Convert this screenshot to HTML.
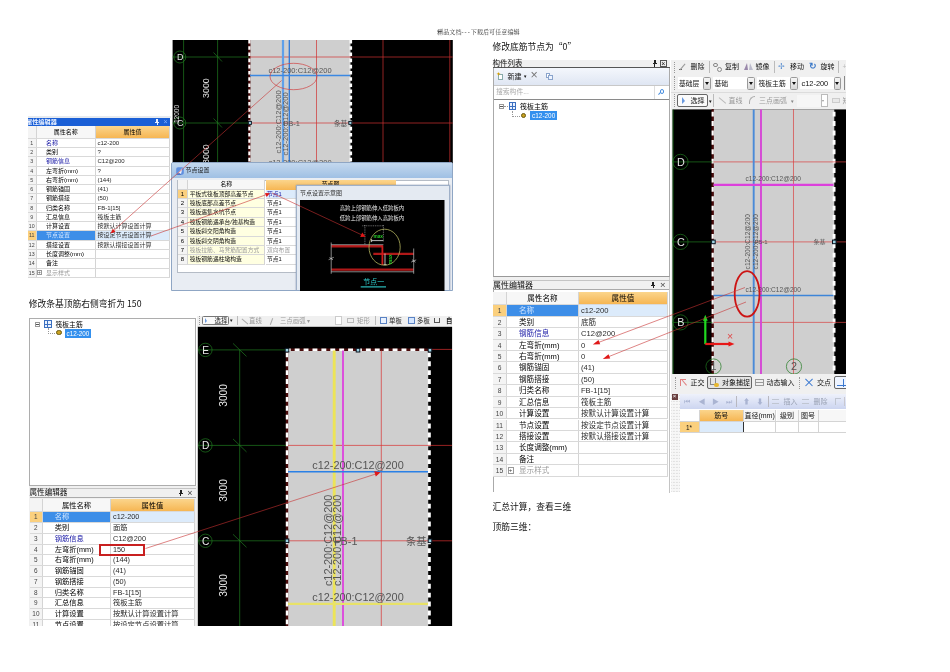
<!DOCTYPE html>
<html lang="zh"><head><meta charset="utf-8"><title>doc</title>
<style>
html,body{margin:0;padding:0;background:#fff;}
body{width:950px;height:672px;position:relative;overflow:hidden;font-family:"Liberation Sans","Noto Sans CJK SC",sans-serif;color:#000;}
.abs{position:absolute;}
.ui{font-family:"Liberation Sans","Noto Sans CJK SC",sans-serif;}
.hd{position:absolute;font-size:8.75px;line-height:12px;white-space:nowrap;color:#111;font-family:"Noto Sans CJK SC",sans-serif;font-weight:400;}
.tbl{position:absolute;background:#fff;overflow:hidden;}
.row{position:absolute;left:0;right:0;border-bottom:1px solid #d9d9d9;box-sizing:border-box;white-space:nowrap;}
.c{position:absolute;top:0;bottom:0;box-sizing:border-box;border-right:1px solid #d4d4d4;overflow:hidden;white-space:nowrap;}
.num{background:#f4f4f4;color:#444;text-align:center;font-size:88%;}
.blue{color:#1a1aa6;}
.gray{color:#9a9a9a;}
.org{background:linear-gradient(#fbd58c,#f6b653);}
svg{position:absolute;overflow:hidden;}
svg text{font-family:"Liberation Sans","Noto Sans CJK SC",sans-serif;}
</style></head><body><div id="pg" style="position:absolute;left:0;top:0;width:950px;height:672px;overflow:hidden;background:#fff;filter:blur(0.35px);">

<div class="abs" style="left:3.4px;width:950px;top:28px;text-align:center;font-family:'Liberation Serif','Noto Serif CJK SC',serif;font-size:6.12px;line-height:8px;color:#333;">精品文档<span style="letter-spacing:0.17em;">---</span>下载后可任意编辑</div>
<svg style="left:171px;top:40px;" width="282" height="126" viewBox="171 40 282 126">
<rect x="171" y="40" width="282" height="126" fill="#fff"/>
<rect x="172.6" y="40" width="280.2" height="126" fill="#000"/>
<rect x="249.5" y="40" width="101" height="126" fill="#cfcfcf"/>
<line x1="249.4" y1="40" x2="249.4" y2="166" stroke="#4a0c0c" stroke-width="2.2"/><line x1="249.4" y1="40" x2="249.4" y2="166" stroke="#fff" stroke-width="2.2" stroke-dasharray="3.6 2.6"/>
<line x1="350.8" y1="40" x2="350.8" y2="166" stroke="#fff" stroke-width="2.6" stroke-dasharray="3.6 2.6"/>
<line x1="172.6" y1="57" x2="249" y2="57" stroke="#1f7a1f" stroke-width="0.7"/><line x1="172.6" y1="123" x2="249" y2="123" stroke="#1f7a1f" stroke-width="0.7"/>
<line x1="183.6" y1="40" x2="183.6" y2="166" stroke="#1f7a1f" stroke-width="0.7"/><line x1="217.6" y1="40" x2="217.6" y2="166" stroke="#1f7a1f" stroke-width="0.7"/>
<line x1="213.5" y1="52.5" x2="222" y2="61.5" stroke="#1f7a1f" stroke-width="0.7"/><line x1="213.5" y1="118.5" x2="222" y2="127.5" stroke="#1f7a1f" stroke-width="0.7"/>
<circle cx="179.8" cy="57" r="6" fill="none" stroke="#1f7a1f" stroke-width="0.7"/><circle cx="179.8" cy="123" r="6" fill="none" stroke="#1f7a1f" stroke-width="0.7"/>
<text x="180.2" y="60.4" font-size="9" fill="#e0e0e0" text-anchor="middle">D</text>
<text x="180.2" y="126.4" font-size="9" fill="#e0e0e0" text-anchor="middle">C</text>
<text transform="translate(208.8,88.1) rotate(-90)" font-size="8.9" fill="#e0e0e0" text-anchor="middle">3000</text>
<text transform="translate(208.8,154.1) rotate(-90)" font-size="8.9" fill="#e0e0e0" text-anchor="middle">3000</text>
<text transform="translate(178.5,123) rotate(-90)" font-size="6.5" fill="#e8e8e8" text-anchor="start">12000</text>
<line x1="250" y1="57" x2="452.8" y2="57" stroke="#d03030" stroke-width="0.7"/><line x1="250" y1="123" x2="452.8" y2="123" stroke="#d03030" stroke-width="0.7"/>
<line x1="316.5" y1="40" x2="316.5" y2="166" stroke="#d03030" stroke-width="0.7"/><line x1="383" y1="40" x2="383" y2="166" stroke="#d03030" stroke-width="0.7"/><line x1="449.8" y1="40" x2="449.8" y2="166" stroke="#d03030" stroke-width="0.7"/>
<line x1="283" y1="40" x2="283" y2="166" stroke="#5fa0ea" stroke-width="2.2"/><line x1="289.3" y1="40" x2="289.3" y2="166" stroke="#2b78d8" stroke-width="1.3"/>
<line x1="250" y1="75.5" x2="350" y2="75.5" stroke="#3b88e2" stroke-width="1.4"/>
<text x="300" y="73.3" font-size="7.5" fill="#555" textLength="63.2" lengthAdjust="spacingAndGlyphs" text-anchor="middle">c12-200:C12@200</text>
<text x="300" y="165.3" font-size="7.5" fill="#555" textLength="63.2" lengthAdjust="spacingAndGlyphs" text-anchor="middle">c12-200:C12@200</text>
<text transform="translate(281,122) rotate(-90)" font-size="7.5" fill="#555" textLength="63.2" lengthAdjust="spacingAndGlyphs" text-anchor="middle">c12-200:C12@200</text>
<text transform="translate(287.5,124) rotate(-90)" font-size="7.5" fill="#555" textLength="63.2" lengthAdjust="spacingAndGlyphs" text-anchor="middle">c12-200:C12@200</text>
<text x="283.6" y="125.6" font-size="7.5" fill="#555">FB-1</text>
<text x="334" y="125.5" font-size="6.6" fill="#555">条基</text>
<rect x="248.4" y="121.4" width="3" height="3" fill="#9fd4e4" stroke="#0a1420" stroke-width="0.9"/>
<rect x="348.8" y="121.4" width="3" height="3" fill="#9fd4e4" stroke="#0a1420" stroke-width="0.9"/>
<ellipse cx="293.5" cy="76.5" rx="23.5" ry="13.2" fill="none" stroke="#d04040" stroke-width="0.7"/>
</svg>
<div class="abs ui" style="left:28px;top:115.5px;width:143px;height:2.5px;background:#e6eaef;"></div>
<div class="abs ui" style="left:28px;top:117.6px;width:142px;height:8px;background:#1a5fd6;color:#e8f0ff;font-size:6.2px;line-height:8px;font-weight:bold;white-space:nowrap;overflow:hidden;"><span style="position:absolute;left:-2px;">属性编辑器</span><span class="abs" style="right:11px;top:1px;width:4px;height:6.5px;"><span class="abs" style="left:1px;top:0;width:2.2px;height:3.2px;border:0.7px solid #e8f0ff;border-right-width:1.2px;box-sizing:border-box;"></span><span class="abs" style="left:0;top:3.2px;width:4px;height:0.8px;background:#e8f0ff;"></span><span class="abs" style="left:1.7px;top:4px;width:0.8px;height:2.4px;background:#e8f0ff;"></span></span><span style="position:absolute;right:2.5px;font-weight:normal;color:#7fb0ff;font-size:7px;">×</span></div>
<div class="tbl ui" style="left:28px;top:125.6px;width:142px;height:152.4px;font-size:6.0px;line-height:9.27px;"><div class="row" style="top:0;height:13.2px;line-height:13.2px;text-align:center;"><div class="c num" style="left:0;width:8.5px;"></div><div class="c" style="left:8.5px;width:59.5px;background:#f7f7f7;">属性名称</div><div class="c org" style="left:68px;width:74px;">属性值</div></div><div class="row" style="top:13.20px;height:9.27px;"><div class="c num" style="left:0;width:8.5px;">1</div><div class="c blue" style="left:8.5px;width:59.5px;padding-left:9.6px;">名称</div><div class="c" style="left:68px;width:74px;padding-left:1.5px;color:#2a2a2a;">c12-200</div></div><div class="row" style="top:22.47px;height:9.27px;"><div class="c num" style="left:0;width:8.5px;">2</div><div class="c " style="left:8.5px;width:59.5px;padding-left:9.6px;">类别</div><div class="c" style="left:68px;width:74px;padding-left:1.5px;color:#2a2a2a;">?</div></div><div class="row" style="top:31.74px;height:9.27px;"><div class="c num" style="left:0;width:8.5px;">3</div><div class="c blue" style="left:8.5px;width:59.5px;padding-left:9.6px;">钢筋信息</div><div class="c" style="left:68px;width:74px;padding-left:1.5px;color:#2a2a2a;">C12@200</div></div><div class="row" style="top:41.01px;height:9.27px;"><div class="c num" style="left:0;width:8.5px;">4</div><div class="c " style="left:8.5px;width:59.5px;padding-left:9.6px;">左弯折(mm)</div><div class="c" style="left:68px;width:74px;padding-left:1.5px;color:#2a2a2a;">?</div></div><div class="row" style="top:50.28px;height:9.27px;"><div class="c num" style="left:0;width:8.5px;">5</div><div class="c " style="left:8.5px;width:59.5px;padding-left:9.6px;">右弯折(mm)</div><div class="c" style="left:68px;width:74px;padding-left:1.5px;color:#2a2a2a;">(144)</div></div><div class="row" style="top:59.55px;height:9.27px;"><div class="c num" style="left:0;width:8.5px;">6</div><div class="c " style="left:8.5px;width:59.5px;padding-left:9.6px;">钢筋锚固</div><div class="c" style="left:68px;width:74px;padding-left:1.5px;color:#2a2a2a;">(41)</div></div><div class="row" style="top:68.82px;height:9.27px;"><div class="c num" style="left:0;width:8.5px;">7</div><div class="c " style="left:8.5px;width:59.5px;padding-left:9.6px;">钢筋搭接</div><div class="c" style="left:68px;width:74px;padding-left:1.5px;color:#2a2a2a;">(50)</div></div><div class="row" style="top:78.09px;height:9.27px;"><div class="c num" style="left:0;width:8.5px;">8</div><div class="c " style="left:8.5px;width:59.5px;padding-left:9.6px;">归类名称</div><div class="c" style="left:68px;width:74px;padding-left:1.5px;color:#2a2a2a;">FB-1[15]</div></div><div class="row" style="top:87.36px;height:9.27px;"><div class="c num" style="left:0;width:8.5px;">9</div><div class="c " style="left:8.5px;width:59.5px;padding-left:9.6px;">汇总信息</div><div class="c" style="left:68px;width:74px;padding-left:1.5px;color:#2a2a2a;">筏板主筋</div></div><div class="row" style="top:96.63px;height:9.27px;"><div class="c num" style="left:0;width:8.5px;">10</div><div class="c " style="left:8.5px;width:59.5px;padding-left:9.6px;">计算设置</div><div class="c" style="left:68px;width:74px;padding-left:1.5px;color:#2a2a2a;">按默认计算设置计算</div></div><div class="row" style="top:105.90px;height:9.27px;"><div class="c num" style="left:0;width:8.5px;background:#fbd07e;">11</div><div class="c " style="left:8.5px;width:59.5px;padding-left:9.6px;background:#3d8ee8;color:#cfe4ff;">节点设置</div><div class="c" style="left:68px;width:74px;padding-left:1.5px;color:#2a2a2a;background:#dcebfb;">按设定节点设置计算</div></div><div class="row" style="top:115.17px;height:9.27px;"><div class="c num" style="left:0;width:8.5px;">12</div><div class="c " style="left:8.5px;width:59.5px;padding-left:9.6px;">搭接设置</div><div class="c" style="left:68px;width:74px;padding-left:1.5px;color:#2a2a2a;">按默认搭接设置计算</div></div><div class="row" style="top:124.44px;height:9.27px;"><div class="c num" style="left:0;width:8.5px;">13</div><div class="c " style="left:8.5px;width:59.5px;padding-left:9.6px;">长度调整(mm)</div><div class="c" style="left:68px;width:74px;padding-left:1.5px;color:#2a2a2a;"></div></div><div class="row" style="top:133.71px;height:9.27px;"><div class="c num" style="left:0;width:8.5px;">14</div><div class="c " style="left:8.5px;width:59.5px;padding-left:9.6px;">备注</div><div class="c" style="left:68px;width:74px;padding-left:1.5px;color:#2a2a2a;"></div></div><div class="row" style="top:142.98px;height:9.27px;"><div class="c num" style="left:0;width:8.5px;">15</div><div class="c gray" style="left:8.5px;width:59.5px;padding-left:9.6px;"><span style="position:absolute;left:0.6px;top:1.9px;width:4.8px;height:4.8px;border:1px solid #999;box-sizing:border-box;line-height:3.9px;font-size:4.8px;text-align:center;color:#444;">+</span>显示样式</div><div class="c" style="left:68px;width:74px;padding-left:1.5px;color:#2a2a2a;"></div></div></div>
<div class="abs ui" style="left:170.5px;top:162.3px;width:282.5px;height:128.3px;background:#e9edf3;border:1px solid #8fa6c4;box-sizing:border-box;overflow:hidden;border-radius:2px 2px 0 0;">
<div class="abs" style="left:0;top:0;width:100%;height:14.5px;background:linear-gradient(#c4d8ee,#9fc0e4);"></div>
<div class="abs" style="left:14px;top:3.2px;font-size:6px;line-height:9px;color:#111;">节点设置</div>
<svg style="left:4.8px;top:4.2px;" width="8" height="8" viewBox="0 0 8 8"><rect x="0.2" y="0.2" width="7.6" height="7.6" rx="1.8" fill="#5f8fe0"/><path d="M0.8 7 L6.6 0.8 L5 7 Z" fill="#f0f6ff"/><path d="M0.5 7.4 Q3 5 5.4 7.4 Z" fill="#2a4fb0"/></svg>
<div class="abs" style="left:5.5px;top:16.5px;width:272px;height:93px;background:#fff;border:1px solid #b5bcc6;box-sizing:border-box;"></div>
<div class="abs" style="left:6.2px;top:17.2px;width:10.5px;height:9.2px;background:#f4f4f4;border-right:1px solid #d4d4d4;border-bottom:1px solid #d4d4d4;box-sizing:border-box;"></div>
<div class="abs" style="left:16.7px;top:17.2px;width:77.3px;height:9.2px;background:#f7f7f7;border-right:1px solid #d4d4d4;border-bottom:1px solid #d4d4d4;box-sizing:border-box;font-size:5.8px;line-height:9px;text-align:center;">名称</div>
<div class="abs org" style="left:94.0px;top:17.2px;width:130px;height:9.2px;box-sizing:border-box;font-size:5.8px;line-height:9px;text-align:center;">节点图</div>
<div class="abs" style="left:6.2px;top:26.40px;width:10.5px;height:9.4px;background:#fbd07e;border-right:1px solid #d4d4d4;border-bottom:1px solid #d9d9d9;box-sizing:border-box;font-size:6px;line-height:9.4px;text-align:center;">1</div>
<div class="abs" style="left:16.7px;top:26.40px;width:77.3px;height:9.4px;background:#ffffe1;border-right:1px solid #d4d4d4;border-bottom:1px solid #d9d9d9;box-sizing:border-box;font-size:5.8px;line-height:9.4px;padding-left:1.5px;white-space:nowrap;overflow:hidden;color:#111;">平板式筏板顶部高差节点</div>
<div class="abs" style="left:94.0px;top:26.40px;width:184px;height:9.4px;border-bottom:1px solid #d9d9d9;box-sizing:border-box;font-size:5.8px;line-height:9.4px;padding-left:1.5px;white-space:nowrap;color:#111;background:#dcebfb;color:#1a1aa6;">节点1</div>
<div class="abs" style="left:6.2px;top:35.80px;width:10.5px;height:9.4px;background:#f4f4f4;border-right:1px solid #d4d4d4;border-bottom:1px solid #d9d9d9;box-sizing:border-box;font-size:6px;line-height:9.4px;text-align:center;">2</div>
<div class="abs" style="left:16.7px;top:35.80px;width:77.3px;height:9.4px;background:#ffffe1;border-right:1px solid #d4d4d4;border-bottom:1px solid #d9d9d9;box-sizing:border-box;font-size:5.8px;line-height:9.4px;padding-left:1.5px;white-space:nowrap;overflow:hidden;color:#111;">筏板底部高差节点</div>
<div class="abs" style="left:94.0px;top:35.80px;width:184px;height:9.4px;border-bottom:1px solid #d9d9d9;box-sizing:border-box;font-size:5.8px;line-height:9.4px;padding-left:1.5px;white-space:nowrap;color:#111;">节点1</div>
<div class="abs" style="left:6.2px;top:45.20px;width:10.5px;height:9.4px;background:#f4f4f4;border-right:1px solid #d4d4d4;border-bottom:1px solid #d9d9d9;box-sizing:border-box;font-size:6px;line-height:9.4px;text-align:center;">3</div>
<div class="abs" style="left:16.7px;top:45.20px;width:77.3px;height:9.4px;background:#ffffe1;border-right:1px solid #d4d4d4;border-bottom:1px solid #d9d9d9;box-sizing:border-box;font-size:5.8px;line-height:9.4px;padding-left:1.5px;white-space:nowrap;overflow:hidden;color:#111;">筏板遇集水坑节点</div>
<div class="abs" style="left:94.0px;top:45.20px;width:184px;height:9.4px;border-bottom:1px solid #d9d9d9;box-sizing:border-box;font-size:5.8px;line-height:9.4px;padding-left:1.5px;white-space:nowrap;color:#111;">节点1</div>
<div class="abs" style="left:6.2px;top:54.60px;width:10.5px;height:9.4px;background:#f4f4f4;border-right:1px solid #d4d4d4;border-bottom:1px solid #d9d9d9;box-sizing:border-box;font-size:6px;line-height:9.4px;text-align:center;">4</div>
<div class="abs" style="left:16.7px;top:54.60px;width:77.3px;height:9.4px;background:#ffffe1;border-right:1px solid #d4d4d4;border-bottom:1px solid #d9d9d9;box-sizing:border-box;font-size:5.8px;line-height:9.4px;padding-left:1.5px;white-space:nowrap;overflow:hidden;color:#111;">筏板钢筋遇承台/独基构造</div>
<div class="abs" style="left:94.0px;top:54.60px;width:184px;height:9.4px;border-bottom:1px solid #d9d9d9;box-sizing:border-box;font-size:5.8px;line-height:9.4px;padding-left:1.5px;white-space:nowrap;color:#111;">节点1</div>
<div class="abs" style="left:6.2px;top:64.00px;width:10.5px;height:9.4px;background:#f4f4f4;border-right:1px solid #d4d4d4;border-bottom:1px solid #d9d9d9;box-sizing:border-box;font-size:6px;line-height:9.4px;text-align:center;">5</div>
<div class="abs" style="left:16.7px;top:64.00px;width:77.3px;height:9.4px;background:#ffffe1;border-right:1px solid #d4d4d4;border-bottom:1px solid #d9d9d9;box-sizing:border-box;font-size:5.8px;line-height:9.4px;padding-left:1.5px;white-space:nowrap;overflow:hidden;color:#111;">筏板斜交阳角构造</div>
<div class="abs" style="left:94.0px;top:64.00px;width:184px;height:9.4px;border-bottom:1px solid #d9d9d9;box-sizing:border-box;font-size:5.8px;line-height:9.4px;padding-left:1.5px;white-space:nowrap;color:#111;">节点1</div>
<div class="abs" style="left:6.2px;top:73.40px;width:10.5px;height:9.4px;background:#f4f4f4;border-right:1px solid #d4d4d4;border-bottom:1px solid #d9d9d9;box-sizing:border-box;font-size:6px;line-height:9.4px;text-align:center;">6</div>
<div class="abs" style="left:16.7px;top:73.40px;width:77.3px;height:9.4px;background:#ffffe1;border-right:1px solid #d4d4d4;border-bottom:1px solid #d9d9d9;box-sizing:border-box;font-size:5.8px;line-height:9.4px;padding-left:1.5px;white-space:nowrap;overflow:hidden;color:#111;">筏板斜交阴角构造</div>
<div class="abs" style="left:94.0px;top:73.40px;width:184px;height:9.4px;border-bottom:1px solid #d9d9d9;box-sizing:border-box;font-size:5.8px;line-height:9.4px;padding-left:1.5px;white-space:nowrap;color:#111;">节点1</div>
<div class="abs" style="left:6.2px;top:82.80px;width:10.5px;height:9.4px;background:#f4f4f4;border-right:1px solid #d4d4d4;border-bottom:1px solid #d9d9d9;box-sizing:border-box;font-size:6px;line-height:9.4px;text-align:center;">7</div>
<div class="abs" style="left:16.7px;top:82.80px;width:77.3px;height:9.4px;background:#ffffe1;border-right:1px solid #d4d4d4;border-bottom:1px solid #d9d9d9;box-sizing:border-box;font-size:5.8px;line-height:9.4px;padding-left:1.5px;white-space:nowrap;overflow:hidden;color:#9a9a9a;">筏板拉筋、马凳筋配置方式</div>
<div class="abs" style="left:94.0px;top:82.80px;width:184px;height:9.4px;border-bottom:1px solid #d9d9d9;box-sizing:border-box;font-size:5.8px;line-height:9.4px;padding-left:1.5px;white-space:nowrap;color:#9a9a9a;">双向布置</div>
<div class="abs" style="left:6.2px;top:92.20px;width:10.5px;height:9.4px;background:#f4f4f4;border-right:1px solid #d4d4d4;border-bottom:1px solid #d9d9d9;box-sizing:border-box;font-size:6px;line-height:9.4px;text-align:center;">8</div>
<div class="abs" style="left:16.7px;top:92.20px;width:77.3px;height:9.4px;background:#ffffe1;border-right:1px solid #d4d4d4;border-bottom:1px solid #d9d9d9;box-sizing:border-box;font-size:5.8px;line-height:9.4px;padding-left:1.5px;white-space:nowrap;overflow:hidden;color:#111;">筏板钢筋遇柱墩构造</div>
<div class="abs" style="left:94.0px;top:92.20px;width:184px;height:9.4px;border-bottom:1px solid #d9d9d9;box-sizing:border-box;font-size:5.8px;line-height:9.4px;padding-left:1.5px;white-space:nowrap;color:#111;">节点1</div>
<div class="abs" style="left:124px;top:21.5px;width:154.5px;height:110px;background:#e4eaf2;border:1px solid #9fb0c8;box-sizing:border-box;box-shadow:0 0 1.5px #7f8fa8;"></div>
<div class="abs" style="left:128.5px;top:25.5px;font-size:6px;line-height:9px;color:#333;">节点设置示意图</div>
</div>
<svg style="left:300px;top:199.5px;" width="144.5" height="91.1" viewBox="300 199.5 144.5 91.1">
<rect x="300" y="199.5" width="144.5" height="92" fill="#000"/>
<text x="372" y="209.8" font-size="5.4" fill="#e8e8e8" text-anchor="middle">高跨上部钢筋伸入低跨板内</text>
<text x="372" y="219.2" font-size="5.4" fill="#e8e8e8" text-anchor="middle">低跨上部钢筋伸入高跨板内</text>
<path d="M331.4 245.8 L382.6 245.8 M373.3 253.4 L413.6 253.4 M331.4 269.1 L413.6 269.1" stroke="#b01818" stroke-width="2.4" fill="none"/>
<path d="M382.4 245 L382.4 264.5" stroke="#d01a1a" stroke-width="1.8" fill="none"/>
<path d="M331.2 242 L331.2 273.3 M413.7 248 L413.7 273.3 M331.2 271.3 L413.7 271.3 M331.2 244.2 L383.4 244.2" stroke="#e0e0e0" stroke-width="0.6" fill="none"/>
<path d="M385 253 L385 264.2 M383.6 264.2 L386.6 264.2" stroke="#e8e8e8" stroke-width="0.8" fill="none"/>
<ellipse cx="384.6" cy="246.7" rx="15.6" ry="18" fill="none" stroke="#b4b45e" stroke-width="0.8"/>
<path d="M364.9 224.5 L364.9 244.5 M362.3 225.3 L383.4 225.3 M383.4 224.5 L383.4 241" stroke="#e0e0e0" stroke-width="0.5" stroke-dasharray="1 0.8" fill="none"/>
<path d="M371.6 240.1 L383.4 240.1 M371.6 238.6 L371.6 241.6" stroke="#e8e8e8" stroke-width="0.8" fill="none"/>
<text x="378.2" y="237.4" font-size="4.8" font-weight="bold" fill="#28c828" text-anchor="middle">max</text>
<text transform="translate(391.8,258.6) rotate(-90)" font-size="4.8" font-weight="bold" fill="#28c828" text-anchor="middle">max</text>
<path d="M328.6 259.2 L331.2 258 L333.8 256.8 M329.5 257 L333 259.4 M411.2 261.6 L416.2 259.4 M412 259.2 L415.5 261.8" stroke="#e0e0e0" stroke-width="0.6" fill="none"/>
<text x="373.7" y="283.8" font-size="7" fill="#30cfcf" text-anchor="middle">节点一</text>
<line x1="360.7" y1="286.4" x2="386" y2="286.4" stroke="#30cfcf" stroke-width="1.1"/>
</svg>
<svg style="left:0;top:0;pointer-events:none;" width="475" height="300" viewBox="0 0 475 300">
<line x1="281.6" y1="80.5" x2="112" y2="232" stroke="#c83030" stroke-width="0.6" fill="none"/>
<polygon points="110.5,233.5 115.5,231.8 112.8,228.8" fill="#e01818"/>
<line x1="151" y1="236" x2="268" y2="194" stroke="#c83030" stroke-width="0.6" fill="none"/>
<polygon points="270,193.3 265,193 266.6,197" fill="#e01818"/>
<line x1="272" y1="193" x2="362" y2="235" stroke="#c83030" stroke-width="0.6" fill="none"/>
<polygon points="365.6,236.8 360.2,237 362.2,232.6" fill="#e01818"/>
</svg>
<div class="hd" style="left:28.8px;top:297.5px;">修改条基顶筋右侧弯折为 150</div>
<div class="abs ui" style="left:29px;top:317.5px;width:167px;height:168px;background:#fff;border:1px solid #adadad;box-sizing:border-box;font-size:6.8px;line-height:9px;">
<span class="abs" style="left:5px;top:3px;width:5px;height:5px;border:0.7px solid #999;box-sizing:border-box;"></span><span class="abs" style="left:6.2px;top:5.2px;width:2.6px;height:0.6px;background:#555;"></span>
<span class="abs" style="left:14px;top:1.6px;width:7.5px;height:7.5px;border:0.8px solid #3a6fc0;background:#eaf2ff;box-sizing:border-box;"></span><span class="abs" style="left:17.3px;top:2px;width:0.8px;height:6.6px;background:#3a6fc0;"></span><span class="abs" style="left:14.4px;top:5px;width:6.8px;height:0.8px;background:#3a6fc0;"></span>
<span class="abs" style="left:25.5px;top:1px;white-space:nowrap;">筏板主筋</span>
<span class="abs" style="left:17.5px;top:9.5px;width:6px;height:4.8px;border-left:0.7px dotted #999;border-bottom:0.7px dotted #999;"></span>
<span class="abs" style="left:26px;top:11px;width:5.6px;height:5.6px;border-radius:50%;background:#c8a020;border:0.8px solid #6a5a10;box-sizing:border-box;"></span>
<span class="abs" style="left:35px;top:10px;height:9.2px;background:#3390ee;color:#fff;font-size:6.3px;line-height:9.2px;padding:0 1.5px;white-space:nowrap;">c12-200</span>
</div>
<div class="abs ui" style="left:197px;top:316px;width:255.2px;height:10.6px;background:#f0f0f0;font-size:6.4px;line-height:9px;white-space:nowrap;overflow:hidden;color:#222;">
<span class="abs" style="left:2px;top:0;width:2px;height:9px;border-left:1px dotted #999;"></span>
<span class="abs" style="left:4.5px;top:-0.5px;width:27px;height:9.6px;border:1px solid #777;border-radius:1.5px;box-sizing:border-box;background:#fafafa;"></span>
<span class="abs" style="left:17.5px;top:-0.5px;">选择</span><span class="abs" style="left:32px;top:0px;font-size:4.5px;">▼</span>
<span class="abs" style="left:39.5px;top:0;width:1px;height:9.4px;background:#bbb;"></span>
<span class="abs" style="left:44px;top:4.6px;width:8px;height:0.8px;background:#aaa;transform:rotate(40deg);"></span><span class="abs" style="left:73.5px;top:1.5px;width:1px;height:7px;background:#aaa;transform:rotate(20deg);"></span><span class="abs" style="left:8px;top:2px;width:0;height:0;border-left:2.6px solid #6a9ae0;border-bottom:2.6px solid transparent;border-top:3.4px solid transparent;"></span>
<span class="abs" style="left:52px;top:-0.5px;color:#999;">直线</span><span class="abs" style="left:83px;top:-0.5px;color:#999;">三点画弧 ▾</span>
<span class="abs" style="left:138px;top:0;width:7px;height:9px;border:1px solid #ccc;box-sizing:border-box;background:#fff;"></span>
<span class="abs" style="left:150px;top:1.5px;width:6.5px;height:5px;border:0.8px solid #bbb;box-sizing:border-box;"></span><span class="abs" style="left:160px;top:-0.5px;color:#999;">矩形</span>
<span class="abs" style="left:178px;top:0;width:1px;height:9.4px;background:#bbb;"></span>
<span class="abs" style="left:182.5px;top:1px;width:7px;height:6.5px;border:0.8px solid #5b83c4;box-sizing:border-box;background:#eaf2ff;"></span><span class="abs" style="left:192px;top:-0.5px;">单板</span>
<span class="abs" style="left:210.5px;top:1px;width:7px;height:6.5px;border:0.8px solid #5b83c4;box-sizing:border-box;background:#d5e6ff;"></span><span class="abs" style="left:220px;top:-0.5px;">多板</span>
<span class="abs" style="left:237px;top:1.5px;width:6px;height:5px;border:0.8px solid #555;border-top:none;box-sizing:border-box;"></span><span class="abs" style="left:249px;top:-0.5px;font-weight:bold;">自</span>
</div>
<svg style="left:197px;top:325.6px;" width="256" height="300" viewBox="197 325.6 256 300">
<rect x="197.8" y="326.4" width="254.3" height="299.4" fill="#000"/>
<rect x="287" y="350" width="141.2" height="276" fill="#cfcfcf"/>
<line x1="285.8" y1="349.4" x2="430.8" y2="349.4" stroke="#4a0c0c" stroke-width="2.4"/><line x1="285.8" y1="349.4" x2="430.8" y2="349.4" stroke="#fff" stroke-width="2.4" stroke-dasharray="4.9 4"/>
<line x1="287" y1="350" x2="287" y2="626" stroke="#4a0c0c" stroke-width="2.4"/><line x1="287" y1="352" x2="287" y2="626" stroke="#fff" stroke-width="2.4" stroke-dasharray="4.9 4"/>
<line x1="429.3" y1="352" x2="429.3" y2="626" stroke="#fff" stroke-width="3" stroke-dasharray="4.9 4"/>
<line x1="198" y1="349.5" x2="286" y2="349.5" stroke="#1f7a1f" stroke-width="0.7"/><line x1="198" y1="445" x2="286" y2="445" stroke="#1f7a1f" stroke-width="0.7"/><line x1="198" y1="540.4" x2="286" y2="540.4" stroke="#1f7a1f" stroke-width="0.7"/>
<line x1="239.7" y1="349.5" x2="239.7" y2="626" stroke="#1f7a1f" stroke-width="0.7"/>
<line x1="233" y1="343.0" x2="246.5" y2="356.0" stroke="#1f7a1f" stroke-width="0.7"/>
<circle cx="205.4" cy="349.5" r="6.7" fill="none" stroke="#1f7a1f" stroke-width="0.7"/>
<line x1="233" y1="438.5" x2="246.5" y2="451.5" stroke="#1f7a1f" stroke-width="0.7"/>
<circle cx="205.4" cy="445" r="6.7" fill="none" stroke="#1f7a1f" stroke-width="0.7"/>
<line x1="233" y1="533.9" x2="246.5" y2="546.9" stroke="#1f7a1f" stroke-width="0.7"/>
<circle cx="205.4" cy="540.4" r="6.7" fill="none" stroke="#1f7a1f" stroke-width="0.7"/>
<text x="205.6" y="353.6" font-size="10.2" fill="#e8e8e8" text-anchor="middle">E</text>
<text x="205.6" y="449.1" font-size="10.2" fill="#e8e8e8" text-anchor="middle">D</text>
<text x="205.6" y="544.5" font-size="10.2" fill="#e8e8e8" text-anchor="middle">C</text>
<text transform="translate(227,395) rotate(-90)" font-size="10.2" fill="#e8e8e8" text-anchor="middle">3000</text>
<text transform="translate(227,490) rotate(-90)" font-size="10.2" fill="#e8e8e8" text-anchor="middle">3000</text>
<text transform="translate(227,585) rotate(-90)" font-size="10.2" fill="#e8e8e8" text-anchor="middle">3000</text>
<text transform="translate(227,660) rotate(-90)" font-size="10.2" fill="#e8e8e8" text-anchor="middle">3000</text>
<line x1="431" y1="349" x2="452" y2="349" stroke="#d83030" stroke-width="0.7"/><line x1="288" y1="445" x2="452" y2="445" stroke="#d83030" stroke-width="0.7"/><line x1="288" y1="540.4" x2="452" y2="540.4" stroke="#d83030" stroke-width="0.7"/>
<line x1="381.3" y1="350" x2="381.3" y2="626" stroke="#d83030" stroke-width="0.7"/>
<line x1="334.2" y1="350" x2="334.2" y2="626" stroke="#ece458" stroke-width="2.9"/>
<line x1="343" y1="350" x2="343" y2="626" stroke="#dc50dc" stroke-width="2"/>
<line x1="288" y1="471.4" x2="428" y2="471.4" stroke="#2a80e6" stroke-width="1.5"/>
<line x1="288" y1="603.5" x2="428" y2="603.5" stroke="#e8e268" stroke-width="2.2"/>
<text x="358" y="468.3" font-size="10.8" fill="#555" textLength="91.4" lengthAdjust="spacingAndGlyphs" text-anchor="middle">c12-200:C12@200</text>
<text x="358" y="600.3" font-size="10.8" fill="#555" textLength="91.4" lengthAdjust="spacingAndGlyphs" text-anchor="middle">c12-200:C12@200</text>
<text transform="translate(331.5,540) rotate(-90)" font-size="10.8" fill="#555" textLength="91.4" lengthAdjust="spacingAndGlyphs" text-anchor="middle">c12-200:C12@200</text>
<text transform="translate(340.5,540) rotate(-90)" font-size="10.8" fill="#555" textLength="91.4" lengthAdjust="spacingAndGlyphs" text-anchor="middle">c12-200:C12@200</text>
<text x="334" y="544.4" font-size="10.8" fill="#555">FB-1</text>
<text x="406" y="544.2" font-size="10.3" fill="#555">条基</text>
<rect x="285.2" y="348.0" width="3.6" height="3.6" fill="#9fd4e4" stroke="#0a1420" stroke-width="1"/>
<rect x="356.2" y="348.0" width="3.6" height="3.6" fill="#9fd4e4" stroke="#0a1420" stroke-width="1"/>
<rect x="428.2" y="348.0" width="3.6" height="3.6" fill="#9fd4e4" stroke="#0a1420" stroke-width="1"/>
<rect x="285.2" y="538.6" width="3.6" height="3.6" fill="#9fd4e4" stroke="#0a1420" stroke-width="1"/>
<rect x="428.2" y="538.6" width="3.6" height="3.6" fill="#9fd4e4" stroke="#0a1420" stroke-width="1"/>
</svg>
<div class="abs ui" style="left:29px;top:486px;width:167.5px;height:140px;background:#f0f0f0;"></div>
<div class="abs ui" style="left:29.5px;top:487.5px;width:166px;height:10px;font-size:7.6px;line-height:8.4px;color:#111;white-space:nowrap;border-bottom:1px solid #aaa;border-top:1px solid #c4c4c4;box-sizing:border-box;background:#f0f0f0;">属性编辑器<span class="abs" style="right:13px;top:1.2px;width:4px;height:6.5px;"><span class="abs" style="left:1px;top:0;width:2.2px;height:3.2px;border:0.7px solid #222;border-right-width:1.2px;box-sizing:border-box;"></span><span class="abs" style="left:0;top:3.2px;width:4px;height:0.8px;background:#222;"></span><span class="abs" style="left:1.7px;top:4px;width:0.8px;height:2.4px;background:#222;"></span></span><span class="abs" style="right:3px;top:0;font-size:9px;line-height:8px;color:#444;">×</span></div>
<div class="abs" style="left:29.8px;top:498.8px;width:166px;height:127px;overflow:hidden;">
<div class="tbl ui" style="left:0px;top:0px;width:165px;height:180px;font-size:7.3px;line-height:10.74px;"><div class="row" style="top:0;height:13.6px;line-height:13.6px;text-align:center;"><div class="c num" style="left:0;width:13.2px;"></div><div class="c" style="left:13.2px;width:68.2px;background:#f7f7f7;">属性名称</div><div class="c org" style="left:81.4px;width:83.6px;">属性值</div></div><div class="row" style="top:13.60px;height:10.74px;"><div class="c num" style="left:0;width:13.2px;background:#fbd07e;">1</div><div class="c blue" style="left:13.2px;width:68.2px;padding-left:11.7px;background:#3d8ee8;color:#cfe4ff;">名称</div><div class="c" style="left:81.4px;width:83.6px;padding-left:1.8px;color:#2a2a2a;background:#dcebfb;">c12-200</div></div><div class="row" style="top:24.34px;height:10.74px;"><div class="c num" style="left:0;width:13.2px;">2</div><div class="c " style="left:13.2px;width:68.2px;padding-left:11.7px;">类别</div><div class="c" style="left:81.4px;width:83.6px;padding-left:1.8px;color:#2a2a2a;">面筋</div></div><div class="row" style="top:35.08px;height:10.74px;"><div class="c num" style="left:0;width:13.2px;">3</div><div class="c blue" style="left:13.2px;width:68.2px;padding-left:11.7px;">钢筋信息</div><div class="c" style="left:81.4px;width:83.6px;padding-left:1.8px;color:#2a2a2a;">C12@200</div></div><div class="row" style="top:45.82px;height:10.74px;"><div class="c num" style="left:0;width:13.2px;">4</div><div class="c " style="left:13.2px;width:68.2px;padding-left:11.7px;">左弯折(mm)</div><div class="c" style="left:81.4px;width:83.6px;padding-left:1.8px;color:#2a2a2a;">150</div></div><div class="row" style="top:56.56px;height:10.74px;"><div class="c num" style="left:0;width:13.2px;">5</div><div class="c " style="left:13.2px;width:68.2px;padding-left:11.7px;">右弯折(mm)</div><div class="c" style="left:81.4px;width:83.6px;padding-left:1.8px;color:#2a2a2a;">(144)</div></div><div class="row" style="top:67.30px;height:10.74px;"><div class="c num" style="left:0;width:13.2px;">6</div><div class="c " style="left:13.2px;width:68.2px;padding-left:11.7px;">钢筋锚固</div><div class="c" style="left:81.4px;width:83.6px;padding-left:1.8px;color:#2a2a2a;">(41)</div></div><div class="row" style="top:78.04px;height:10.74px;"><div class="c num" style="left:0;width:13.2px;">7</div><div class="c " style="left:13.2px;width:68.2px;padding-left:11.7px;">钢筋搭接</div><div class="c" style="left:81.4px;width:83.6px;padding-left:1.8px;color:#2a2a2a;">(50)</div></div><div class="row" style="top:88.78px;height:10.74px;"><div class="c num" style="left:0;width:13.2px;">8</div><div class="c " style="left:13.2px;width:68.2px;padding-left:11.7px;">归类名称</div><div class="c" style="left:81.4px;width:83.6px;padding-left:1.8px;color:#2a2a2a;">FB-1[15]</div></div><div class="row" style="top:99.52px;height:10.74px;"><div class="c num" style="left:0;width:13.2px;">9</div><div class="c " style="left:13.2px;width:68.2px;padding-left:11.7px;">汇总信息</div><div class="c" style="left:81.4px;width:83.6px;padding-left:1.8px;color:#2a2a2a;">筏板主筋</div></div><div class="row" style="top:110.26px;height:10.74px;"><div class="c num" style="left:0;width:13.2px;">10</div><div class="c " style="left:13.2px;width:68.2px;padding-left:11.7px;">计算设置</div><div class="c" style="left:81.4px;width:83.6px;padding-left:1.8px;color:#2a2a2a;">按默认计算设置计算</div></div><div class="row" style="top:121.00px;height:10.74px;"><div class="c num" style="left:0;width:13.2px;">11</div><div class="c " style="left:13.2px;width:68.2px;padding-left:11.7px;">节点设置</div><div class="c" style="left:81.4px;width:83.6px;padding-left:1.8px;color:#2a2a2a;">按设定节点设置计算</div></div><div class="row" style="top:131.74px;height:10.74px;"><div class="c num" style="left:0;width:13.2px;">12</div><div class="c " style="left:13.2px;width:68.2px;padding-left:11.7px;">搭接设置</div><div class="c" style="left:81.4px;width:83.6px;padding-left:1.8px;color:#2a2a2a;">按默认搭接设置计算</div></div><div class="row" style="top:142.48px;height:10.74px;"><div class="c num" style="left:0;width:13.2px;">13</div><div class="c " style="left:13.2px;width:68.2px;padding-left:11.7px;">长度调整(mm)</div><div class="c" style="left:81.4px;width:83.6px;padding-left:1.8px;color:#2a2a2a;"></div></div><div class="row" style="top:153.22px;height:10.74px;"><div class="c num" style="left:0;width:13.2px;">14</div><div class="c " style="left:13.2px;width:68.2px;padding-left:11.7px;">备注</div><div class="c" style="left:81.4px;width:83.6px;padding-left:1.8px;color:#2a2a2a;"></div></div><div class="row" style="top:163.96px;height:10.74px;"><div class="c num" style="left:0;width:13.2px;">15</div><div class="c gray" style="left:13.2px;width:68.2px;padding-left:11.7px;"><span style="position:absolute;left:0.7px;top:2.1px;width:5.8px;height:5.8px;border:1px solid #999;box-sizing:border-box;line-height:4.7px;font-size:5.8px;text-align:center;color:#444;">+</span>显示样式</div><div class="c" style="left:81.4px;width:83.6px;padding-left:1.8px;color:#2a2a2a;"></div></div></div>
</div>
<div class="abs" style="left:98.9px;top:543.6px;width:46.6px;height:12px;border:2px solid #c82020;box-sizing:border-box;"></div>
<svg style="left:0;top:300px;pointer-events:none;" width="475" height="340" viewBox="0 0 475 340">
<line x1="145.5" y1="248.5" x2="377" y2="173.6" stroke="#c83030" stroke-width="0.6"/>
<polygon points="380.6,172.3 374.2,171.2 375.8,176.6" fill="#e01818"/>
</svg>
<div class="hd" style="left:492.6px;top:41px;">修改底筋节点为“0”</div>
<div class="abs ui" style="left:492.5px;top:60px;width:177px;height:216.5px;background:#fff;border-left:1px solid #aaa;border-right:1px solid #aaa;border-bottom:1px solid #999;box-sizing:border-box;"></div>
<div class="abs ui" style="left:492.5px;top:60px;width:177px;height:7.6px;background:#f0f0f0;border-bottom:1px solid #555;box-sizing:border-box;font-size:7.5px;line-height:7.2px;white-space:nowrap;color:#111;">构件列表<span class="abs" style="right:13px;top:0.3px;width:4px;height:6.5px;"><span class="abs" style="left:1px;top:0;width:2.2px;height:3.2px;border:0.7px solid #222;border-right-width:1.2px;box-sizing:border-box;"></span><span class="abs" style="left:0;top:3.2px;width:4px;height:0.8px;background:#222;"></span><span class="abs" style="left:1.7px;top:4px;width:0.8px;height:2.4px;background:#222;"></span></span><span class="abs" style="right:3px;top:0;width:6.5px;height:6.5px;border:0.7px solid #555;box-sizing:border-box;font-size:7px;line-height:5.5px;text-align:center;">×</span></div>
<div class="abs ui" style="left:493.5px;top:67.6px;width:175px;height:17.6px;background:linear-gradient(#f4f7fc,#dfe6f3);font-size:7px;line-height:17px;white-space:nowrap;color:#111;"><span class="abs" style="left:4px;top:6px;width:5.5px;height:6px;border:0.7px solid #8aa;background:#fff;box-sizing:border-box;"></span><span class="abs" style="left:2.5px;top:3px;font-size:5.5px;line-height:6px;color:#d8a000;">✦</span><span class="abs" style="left:14px;top:0;">新建</span><span class="abs" style="left:29.5px;top:0;font-size:4.4px;">▼</span><span class="abs" style="left:37px;top:-1px;font-size:12.5px;color:#777;">×</span><span class="abs" style="left:52px;top:5px;width:4.6px;height:5.2px;border:0.7px solid #8aa4cc;background:#fff;box-sizing:border-box;"></span><span class="abs" style="left:54.5px;top:7px;width:4.6px;height:5.2px;border:0.7px solid #8aa4cc;background:#eef4ff;box-sizing:border-box;"></span></div>
<div class="abs ui" style="left:493.5px;top:85.2px;width:175px;height:14.4px;background:#fff;border-top:1px solid #c8c8c8;border-bottom:1.2px solid #8a8a8a;box-sizing:border-box;font-size:6.8px;line-height:12px;color:#aaa;white-space:nowrap;"><span class="abs" style="left:2.5px;top:0;">搜索构件...</span><span class="abs" style="left:160.5px;top:0;width:1px;height:12.5px;background:#ddd;"></span><span class="abs" style="left:166px;top:2.6px;width:4.8px;height:4.8px;border:1px solid #4a90e0;border-radius:50%;box-sizing:border-box;"></span><span class="abs" style="left:164.6px;top:7.3px;width:3px;height:1px;background:#4a90e0;transform:rotate(-45deg);"></span></div>
<div class="abs ui" style="left:493.5px;top:99.6px;width:175px;height:30px;font-size:7px;line-height:9px;">
<span class="abs" style="left:5.5px;top:4.3px;width:5px;height:5px;border:0.7px solid #999;box-sizing:border-box;"></span><span class="abs" style="left:6.7px;top:6.5px;width:2.6px;height:0.6px;background:#555;"></span>
<span class="abs" style="left:10.5px;top:6.6px;width:4px;height:0;border-top:0.7px dotted #999;"></span>
<span class="abs" style="left:15px;top:2.8px;width:7.8px;height:7.8px;border:0.8px solid #3a6fc0;background:#eaf2ff;box-sizing:border-box;"></span><span class="abs" style="left:18.5px;top:3.2px;width:0.8px;height:7px;background:#3a6fc0;"></span><span class="abs" style="left:15.4px;top:6.3px;width:7px;height:0.8px;background:#3a6fc0;"></span>
<span class="abs" style="left:26.5px;top:2.3px;white-space:nowrap;">筏板主筋</span>
<span class="abs" style="left:18.8px;top:11px;width:6.5px;height:5px;border-left:0.7px dotted #999;border-bottom:0.7px dotted #999;"></span>
<span class="abs" style="left:27px;top:13px;width:5.8px;height:5.8px;border-radius:50%;background:#c8a020;border:0.8px solid #6a5a10;box-sizing:border-box;"></span>
<span class="abs" style="left:36.8px;top:11.5px;height:9.4px;background:#3390ee;color:#fff;font-size:6.4px;line-height:9.4px;padding:0 1.8px;white-space:nowrap;">c12-200</span>
</div>
<div class="abs ui" style="left:670.5px;top:60px;width:175.2px;height:49px;background:#f0f0f0;font-size:7px;line-height:13px;white-space:nowrap;overflow:hidden;color:#111;">
<span class="abs" style="left:3.5px;top:1.5px;height:11px;border-left:1px dotted #999;"></span>
<span class="abs" style="left:8.5px;top:9.2px;width:3.4px;height:0.8px;background:#666;"></span><span class="abs" style="left:11px;top:3px;width:1.4px;height:8px;background:#999;transform:rotate(40deg);"></span>
<span class="abs" style="left:20px;top:0;">删除</span>
<span class="abs" style="left:38.5px;top:1px;width:1px;height:11.5px;background:#bbb;"></span>
<span class="abs" style="left:42.5px;top:2.5px;width:2.6px;height:2.6px;border:0.7px solid #888;border-radius:50%;"></span><span class="abs" style="left:46px;top:6.5px;width:3px;height:3px;border:0.7px solid #888;border-radius:50%;"></span>
<span class="abs" style="left:54.5px;top:0;">复制</span>
<span class="abs" style="left:73px;top:3px;width:0;height:0;border-left:3.4px solid transparent;border-right:0.4px solid transparent;border-bottom:7.5px solid #98a;"></span><span class="abs" style="left:78.2px;top:3px;width:0;height:0;border-right:3.4px solid transparent;border-left:0.4px solid transparent;border-bottom:7.5px solid #bbc;"></span>
<span class="abs" style="left:85px;top:0;">镜像</span>
<span class="abs" style="left:103.5px;top:1px;width:1px;height:11.5px;background:#bbb;"></span>
<span class="abs" style="left:107.5px;top:-0.3px;font-size:8px;color:#5a8fd0;">✢</span>
<span class="abs" style="left:119.5px;top:0;">移动</span>
<span class="abs" style="left:138.5px;top:-0.3px;font-size:8.5px;color:#3a78c8;font-weight:bold;">↻</span>
<span class="abs" style="left:150px;top:0;">旋转</span>
<span class="abs" style="left:167.5px;top:1px;width:1px;height:11.5px;background:#bbb;"></span><span class="abs" style="left:172px;top:0;color:#bbb;">+</span>
<span class="abs" style="left:3.5px;top:15.5px;height:14px;border-left:1px dotted #999;"></span>
<span class="abs" style="left:7px;top:17.4px;width:26.5px;height:11.4px;background:#fff;"></span><span class="abs" style="left:8.5px;top:16.6px;font-size:6.8px;">基础层</span><span class="abs" style="left:32.7px;top:16.6px;width:7.6px;height:13.2px;background:linear-gradient(#f6f6f6,#d8d8d8);border:0.8px solid #9a9a9a;box-sizing:border-box;border-radius:1.6px;"></span><span class="abs" style="left:34.1px;top:22px;width:0;height:0;border-left:2.4px solid transparent;border-right:2.4px solid transparent;border-top:3px solid #111;"></span>
<span class="abs" style="left:42.5px;top:17.4px;width:35px;height:11.4px;background:#fff;"></span><span class="abs" style="left:44.0px;top:16.6px;font-size:6.8px;">基础</span><span class="abs" style="left:76.7px;top:16.6px;width:7.6px;height:13.2px;background:linear-gradient(#f6f6f6,#d8d8d8);border:0.8px solid #9a9a9a;box-sizing:border-box;border-radius:1.6px;"></span><span class="abs" style="left:78.1px;top:22px;width:0;height:0;border-left:2.4px solid transparent;border-right:2.4px solid transparent;border-top:3px solid #111;"></span>
<span class="abs" style="left:86.5px;top:17.4px;width:34px;height:11.4px;background:#fff;"></span><span class="abs" style="left:88.0px;top:16.6px;font-size:6.8px;">筏板主筋</span><span class="abs" style="left:119.7px;top:16.6px;width:7.6px;height:13.2px;background:linear-gradient(#f6f6f6,#d8d8d8);border:0.8px solid #9a9a9a;box-sizing:border-box;border-radius:1.6px;"></span><span class="abs" style="left:121.1px;top:22px;width:0;height:0;border-left:2.4px solid transparent;border-right:2.4px solid transparent;border-top:3px solid #111;"></span>
<span class="abs" style="left:129.5px;top:17.4px;width:34.5px;height:11.4px;background:#fff;"></span><span class="abs" style="left:131.0px;top:16.6px;font-size:7.4px;">c12-200</span><span class="abs" style="left:163.2px;top:16.6px;width:7.6px;height:13.2px;background:linear-gradient(#f6f6f6,#d8d8d8);border:0.8px solid #9a9a9a;box-sizing:border-box;border-radius:1.6px;"></span><span class="abs" style="left:164.6px;top:22px;width:0;height:0;border-left:2.4px solid transparent;border-right:2.4px solid transparent;border-top:3px solid #111;"></span>
<span class="abs" style="left:173px;top:15.5px;width:1.6px;height:14px;border-left:1px solid #888;border-right:1px solid #888;"></span>
<span class="abs" style="left:0;top:31.5px;width:176px;height:1px;background:#dcdcdc;"></span>
<span class="abs" style="left:3.5px;top:34px;height:13px;border-left:1px dotted #999;"></span>
<span class="abs" style="left:6.5px;top:33.6px;width:30.5px;height:13.6px;border:1px solid #666;border-radius:2px;box-sizing:border-box;background:#fbfbfb;"></span>
<span class="abs" style="left:11px;top:36.5px;width:0;height:0;border-left:3px solid #6a9ae0;border-bottom:3px solid transparent;border-top:4px solid transparent;"></span>
<span class="abs" style="left:20px;top:33.8px;">选择</span><span class="abs" style="left:37.6px;top:34.5px;font-size:4.6px;">▼</span>
<span class="abs" style="left:42px;top:34px;width:1px;height:13px;background:#bbb;"></span>
<span class="abs" style="left:47px;top:39.5px;width:9px;height:0.8px;background:#bbb;transform:rotate(40deg);"></span>
<span class="abs" style="left:58px;top:33.8px;color:#999;">直线</span>
<span class="abs" style="left:78px;top:35.5px;width:6px;height:8px;border-left:1px solid #aaa;border-top:1px solid #aaa;border-radius:6px 0 0 0;box-sizing:border-box;"></span>
<span class="abs" style="left:88.5px;top:33.8px;color:#999;">三点画弧</span><span class="abs" style="left:119.5px;top:35.2px;font-size:4.6px;color:#888;">▼</span>
<span class="abs" style="left:126.5px;top:34.5px;width:31px;height:12px;background:#f6f6f6;"></span>
<span class="abs" style="left:150px;top:34.2px;width:7px;height:12.6px;background:#fff;border:0.8px solid #bbb;box-sizing:border-box;"></span><span class="abs" style="left:151.6px;top:39.5px;width:0;height:0;border-left:1.8px solid transparent;border-right:1.8px solid transparent;border-top:2.2px solid #999;"></span>
<span class="abs" style="left:161px;top:37.5px;width:8px;height:5px;border:0.8px solid #ccc;background:#e8e8e8;box-sizing:border-box;"></span><span class="abs" style="left:172px;top:33.8px;color:#999;">矩形</span>
</div>
<svg style="left:670.5px;top:108.8px;" width="175.2" height="265.4" viewBox="670.5 108.8 175.2 265.4">
<rect x="670.5" y="108.8" width="176" height="266" fill="#f0f0f0"/>
<rect x="672" y="109.2" width="173.8" height="266" fill="#000"/>
<rect x="712.8" y="109.2" width="121" height="266" fill="#cfcfcf"/>
<line x1="712.2" y1="108.8" x2="712.2" y2="375" stroke="#4a0c0c" stroke-width="2.2"/><line x1="712.2" y1="111.5" x2="712.2" y2="375" stroke="#fff" stroke-width="2.2" stroke-dasharray="4.9 4.5"/>
<line x1="833.6" y1="111.5" x2="833.6" y2="375" stroke="#fff" stroke-width="2.8" stroke-dasharray="4.9 4.5"/>
<line x1="672.6" y1="109.2" x2="672.6" y2="375" stroke="#1f8a1f" stroke-width="0.6"/>
<line x1="672" y1="161.7" x2="712" y2="161.7" stroke="#1f7a1f" stroke-width="0.7"/>
<circle cx="680" cy="161.7" r="7.6" fill="none" stroke="#1f7a1f" stroke-width="0.7"/>
<text x="680.4" y="165.6" font-size="10.8" fill="#e4e4e4" text-anchor="middle">D</text>
<line x1="672" y1="241.7" x2="712" y2="241.7" stroke="#1f7a1f" stroke-width="0.7"/>
<circle cx="680" cy="241.7" r="7.6" fill="none" stroke="#1f7a1f" stroke-width="0.7"/>
<text x="680.4" y="245.6" font-size="10.8" fill="#e4e4e4" text-anchor="middle">C</text>
<line x1="672" y1="322.2" x2="712" y2="322.2" stroke="#1f7a1f" stroke-width="0.7"/>
<circle cx="680" cy="322.2" r="7.6" fill="none" stroke="#1f7a1f" stroke-width="0.7"/>
<text x="680.4" y="326.09999999999997" font-size="10.8" fill="#e4e4e4" text-anchor="middle">B</text>
<line x1="713" y1="161.7" x2="845.8" y2="161.7" stroke="#d84040" stroke-width="0.7"/>
<line x1="713" y1="241.7" x2="845.8" y2="241.7" stroke="#d84040" stroke-width="0.7"/>
<line x1="713" y1="322.2" x2="845.8" y2="322.2" stroke="#d84040" stroke-width="0.7"/>
<line x1="793" y1="108.8" x2="793" y2="375" stroke="#d84040" stroke-width="0.7"/>
<line x1="753.2" y1="109.2" x2="753.2" y2="375" stroke="#4a8ad8" stroke-width="1.9"/>
<line x1="760.5" y1="109.2" x2="760.5" y2="375" stroke="#d648d6" stroke-width="1.9"/>
<line x1="713" y1="184.6" x2="833" y2="184.6" stroke="#dc40dc" stroke-width="2.2"/>
<line x1="713" y1="295.2" x2="833" y2="295.2" stroke="#3d85d8" stroke-width="1.5"/>
<text x="772.7" y="180.6" font-size="6.6" fill="#555" textLength="55.4" lengthAdjust="spacingAndGlyphs" text-anchor="middle">c12-200:C12@200</text>
<text x="772.7" y="292" font-size="6.6" fill="#555" textLength="55.4" lengthAdjust="spacingAndGlyphs" text-anchor="middle">c12-200:C12@200</text>
<text transform="translate(749.5,241.5) rotate(-90)" font-size="6.6" fill="#555" textLength="55.4" lengthAdjust="spacingAndGlyphs" text-anchor="middle">c12-200:C12@200</text>
<text transform="translate(757.5,241.5) rotate(-90)" font-size="6.6" fill="#555" textLength="55.4" lengthAdjust="spacingAndGlyphs" text-anchor="middle">c12-200:C12@200</text>
<text x="754" y="244" font-size="6" fill="#555">FB-1</text>
<text x="813" y="244" font-size="6" fill="#555">条基</text>
<rect x="711.1" y="239.9" width="3.6" height="3.6" fill="#9fd4e4" stroke="#0a1420" stroke-width="1"/>
<rect x="832.0" y="239.9" width="3.6" height="3.6" fill="#9fd4e4" stroke="#0a1420" stroke-width="1"/>
<ellipse cx="746.6" cy="293.7" rx="12.4" ry="22.8" fill="none" stroke="#cc1414" stroke-width="1.8"/>
<line x1="704.8" y1="319" x2="704.8" y2="344" stroke="#20d820" stroke-width="2.2"/><polygon points="704.8,314.5 702.4,320.5 707.2,320.5" fill="#20d820"/>
<line x1="704.8" y1="343.8" x2="729" y2="343.8" stroke="#e81818" stroke-width="2.2"/><polygon points="734,343.8 728,341.4 728,346.2" fill="#e81818"/>
<text x="729.6" y="340" font-size="10.5" fill="#e04848" text-anchor="middle">×</text>
<circle cx="713" cy="366.3" r="7.6" fill="none" stroke="#1f7a1f" stroke-width="0.7"/>
<text x="713" y="370.2" font-size="10.8" fill="#555" text-anchor="middle">1</text>
<circle cx="793.5" cy="366.3" r="7.6" fill="none" stroke="#1f7a1f" stroke-width="0.7"/>
<text x="793.5" y="370.2" font-size="10.8" fill="#555" text-anchor="middle">2</text>
</svg>
<div class="abs ui" style="left:670.5px;top:374px;width:175.2px;height:19.5px;background:#f0f0f0;font-size:7px;line-height:17px;white-space:nowrap;overflow:hidden;color:#111;">
<span class="abs" style="left:4px;top:3px;height:12px;border-left:1px dotted #999;"></span>
<span class="abs" style="left:9px;top:4.5px;width:6px;height:7px;border-left:1px solid #e08080;border-top:1px solid #e08080;box-sizing:border-box;"></span><span class="abs" style="left:10.5px;top:8.4px;width:6.5px;height:0.8px;background:#e08080;transform:rotate(50deg);"></span>
<span class="abs" style="left:20px;top:0;">正交</span>
<span class="abs" style="left:36.5px;top:2.2px;width:45px;height:13px;border:1px solid #666;border-radius:2px;box-sizing:border-box;background:#e4e4e4;"></span>
<span class="abs" style="left:39.5px;top:4px;width:6px;height:6.5px;border-left:1px solid #888;border-right:1px solid #888;border-bottom:1px solid #888;box-sizing:border-box;"></span><span class="abs" style="left:43.5px;top:8.5px;width:4.6px;height:4.6px;border-radius:50%;background:#e8b830;"></span>
<span class="abs" style="left:51.5px;top:0;">对象捕捉</span>
<span class="abs" style="left:84.5px;top:5px;width:8.5px;height:7px;border:0.8px solid #999;box-sizing:border-box;"></span><span class="abs" style="left:84.5px;top:7.6px;width:8.5px;height:0.8px;background:#999;"></span>
<span class="abs" style="left:96px;top:0;">动态输入</span>
<span class="abs" style="left:128.5px;top:3px;height:12px;border-left:1px dotted #999;"></span>
<span class="abs" style="left:133.5px;top:8.2px;width:10px;height:0.9px;background:#3a78d0;transform:rotate(45deg);"></span><span class="abs" style="left:133.5px;top:8.2px;width:10px;height:0.9px;background:#3a78d0;transform:rotate(-45deg);"></span>
<span class="abs" style="left:146.5px;top:0;">交点</span>
<span class="abs" style="left:163.5px;top:2.2px;width:20px;height:13px;border:1px solid #666;border-radius:2px;box-sizing:border-box;background:#eef4ff;"></span><span class="abs" style="left:166px;top:10.5px;width:9px;height:1px;background:#3a78d0;"></span><span class="abs" style="left:172.5px;top:5px;width:1px;height:8px;background:#3a78d0;"></span>
</div>
<div class="abs ui" style="left:670.5px;top:393.6px;width:175.2px;height:98.7px;background:#fff;overflow:hidden;font-size:7px;white-space:nowrap;color:#111;">
<div class="abs" style="left:0;top:0;width:9px;height:98.7px;background:#f7f7f7;background-image:radial-gradient(circle at 1.2px 1.2px,#d0d0d0 0.5px,rgba(0,0,0,0) 0.8px);background-size:3px 3px;background-position:1.5px 0;"></div>
<span class="abs" style="left:1px;top:0.6px;width:6px;height:5.6px;background:#6a4040;color:#fff;font-size:6px;line-height:5.4px;text-align:center;">×</span>
<div class="abs" style="left:9px;top:0;width:167px;height:15.8px;background:linear-gradient(#eef1fb,#ccd5f0);"></div>
<span class="abs" style="left:13.5px;top:0;color:#aab4d2;font-size:7px;line-height:15px;">⏮</span><span class="abs" style="left:28px;top:0;color:#aab4d2;font-size:7px;line-height:15px;">◀</span><span class="abs" style="left:41.5px;top:0;color:#aab4d2;font-size:7px;line-height:15px;">▶</span><span class="abs" style="left:55px;top:0;color:#aab4d2;font-size:7px;line-height:15px;">⏭</span>
<span class="abs" style="left:65.5px;top:2.5px;width:1px;height:10.5px;background:#b8b8c0;"></span>
<span class="abs" style="left:72.5px;top:0;color:#aab4d2;font-size:7px;line-height:15px;">⬆</span><span class="abs" style="left:86px;top:0;color:#aab4d2;font-size:7px;line-height:15px;">⬇</span>
<span class="abs" style="left:97px;top:2.5px;width:1px;height:10.5px;background:#b8b8c0;"></span>
<span class="abs" style="left:101.5px;top:5px;width:7px;height:5.5px;border-top:1px solid #c0c6d2;border-bottom:1px solid #c0c6d2;box-sizing:border-box;"></span>
<span class="abs" style="left:113px;top:0;line-height:15px;color:#9aa2b4;">插入</span>
<span class="abs" style="left:131.5px;top:5px;width:7px;height:5.5px;border-top:1px solid #c0c6d2;border-bottom:1px solid #c0c6d2;box-sizing:border-box;"></span>
<span class="abs" style="left:143px;top:0;line-height:15px;color:#9aa2b4;">删除</span>
<span class="abs" style="left:164px;top:4px;width:6px;height:7px;border-left:1px solid #c0c6d2;border-top:1px solid #c0c6d2;box-sizing:border-box;"></span><span class="abs" style="left:173.5px;top:3px;width:1px;height:9px;background:#c8c8d0;"></span>
<div class="abs" style="left:9px;top:16.6px;width:167px;height:11.6px;border-bottom:1px solid #d4d4d4;box-sizing:border-box;line-height:11px;text-align:center;"><div class="c" style="left:0;width:20.2px;background:#fff;"></div><div class="c org" style="left:20.2px;width:44px;">筋号</div><div class="c" style="left:64.2px;width:32.8px;background:#f7f7f7;">直径(mm)</div><div class="c" style="left:97px;width:22px;background:#f7f7f7;">级别</div><div class="c" style="left:119px;width:20px;background:#f7f7f7;">图号</div><div class="c" style="left:139px;width:40px;background:#f7f7f7;border-right:none;"></div></div>
<div class="abs" style="left:9px;top:28.2px;width:167px;height:11.7px;border-bottom:1px solid #d4d4d4;box-sizing:border-box;line-height:11px;text-align:center;"><div class="c" style="left:0;width:20.2px;background:#fbd07e;font-size:6.4px;">1*</div><div class="c" style="left:20.2px;width:44px;background:#dcebfb;border-right:1px solid #333;"></div><div class="c" style="left:64.2px;width:32.8px;"></div><div class="c" style="left:97px;width:22px;"></div><div class="c" style="left:119px;width:20px;"></div></div>
</div>
<div class="abs ui" style="left:492.5px;top:277px;width:177px;height:215.3px;background:#f0f0f0;"></div>
<div class="abs ui" style="left:493px;top:279.8px;width:176px;height:10.4px;font-size:8px;line-height:10px;color:#111;white-space:nowrap;border-bottom:1px solid #aaa;border-top:1px solid #c4c4c4;box-sizing:border-box;background:#f0f0f0;">属性编辑器<span class="abs" style="right:14px;top:1.2px;width:4px;height:6.5px;"><span class="abs" style="left:1px;top:0;width:2.2px;height:3.2px;border:0.7px solid #222;border-right-width:1.2px;box-sizing:border-box;"></span><span class="abs" style="left:0;top:3.2px;width:4px;height:0.8px;background:#222;"></span><span class="abs" style="left:1.7px;top:4px;width:0.8px;height:2.4px;background:#222;"></span></span><span class="abs" style="right:3.5px;top:0;font-size:9.5px;line-height:8px;color:#444;">×</span></div>
<div class="abs" style="left:492.5px;top:290px;width:176.5px;height:202.3px;background:#fff;border-left:1px solid #aaa;box-sizing:border-box;"></div>
<div class="tbl ui" style="left:493.3px;top:292.0px;width:174.5px;height:185px;font-size:7.6px;line-height:11.41px;"><div class="row" style="top:0;height:13.4px;line-height:13.4px;text-align:center;"><div class="c num" style="left:0;width:13.5px;"></div><div class="c" style="left:13.5px;width:72.3px;background:#f7f7f7;">属性名称</div><div class="c org" style="left:85.8px;width:88.7px;">属性值</div></div><div class="row" style="top:13.40px;height:11.41px;"><div class="c num" style="left:0;width:13.5px;background:#fbd07e;">1</div><div class="c blue" style="left:13.5px;width:72.3px;padding-left:12.2px;background:#3d8ee8;color:#cfe4ff;">名称</div><div class="c" style="left:85.8px;width:88.7px;padding-left:1.9px;color:#2a2a2a;background:#dcebfb;">c12-200</div></div><div class="row" style="top:24.81px;height:11.41px;"><div class="c num" style="left:0;width:13.5px;">2</div><div class="c " style="left:13.5px;width:72.3px;padding-left:12.2px;">类别</div><div class="c" style="left:85.8px;width:88.7px;padding-left:1.9px;color:#2a2a2a;">底筋</div></div><div class="row" style="top:36.22px;height:11.41px;"><div class="c num" style="left:0;width:13.5px;">3</div><div class="c blue" style="left:13.5px;width:72.3px;padding-left:12.2px;">钢筋信息</div><div class="c" style="left:85.8px;width:88.7px;padding-left:1.9px;color:#2a2a2a;">C12@200</div></div><div class="row" style="top:47.63px;height:11.41px;"><div class="c num" style="left:0;width:13.5px;">4</div><div class="c " style="left:13.5px;width:72.3px;padding-left:12.2px;">左弯折(mm)</div><div class="c" style="left:85.8px;width:88.7px;padding-left:1.9px;color:#2a2a2a;">0</div></div><div class="row" style="top:59.04px;height:11.41px;"><div class="c num" style="left:0;width:13.5px;">5</div><div class="c " style="left:13.5px;width:72.3px;padding-left:12.2px;">右弯折(mm)</div><div class="c" style="left:85.8px;width:88.7px;padding-left:1.9px;color:#2a2a2a;">0</div></div><div class="row" style="top:70.45px;height:11.41px;"><div class="c num" style="left:0;width:13.5px;">6</div><div class="c " style="left:13.5px;width:72.3px;padding-left:12.2px;">钢筋锚固</div><div class="c" style="left:85.8px;width:88.7px;padding-left:1.9px;color:#2a2a2a;">(41)</div></div><div class="row" style="top:81.86px;height:11.41px;"><div class="c num" style="left:0;width:13.5px;">7</div><div class="c " style="left:13.5px;width:72.3px;padding-left:12.2px;">钢筋搭接</div><div class="c" style="left:85.8px;width:88.7px;padding-left:1.9px;color:#2a2a2a;">(50)</div></div><div class="row" style="top:93.27px;height:11.41px;"><div class="c num" style="left:0;width:13.5px;">8</div><div class="c " style="left:13.5px;width:72.3px;padding-left:12.2px;">归类名称</div><div class="c" style="left:85.8px;width:88.7px;padding-left:1.9px;color:#2a2a2a;">FB-1[15]</div></div><div class="row" style="top:104.68px;height:11.41px;"><div class="c num" style="left:0;width:13.5px;">9</div><div class="c " style="left:13.5px;width:72.3px;padding-left:12.2px;">汇总信息</div><div class="c" style="left:85.8px;width:88.7px;padding-left:1.9px;color:#2a2a2a;">筏板主筋</div></div><div class="row" style="top:116.09px;height:11.41px;"><div class="c num" style="left:0;width:13.5px;">10</div><div class="c " style="left:13.5px;width:72.3px;padding-left:12.2px;">计算设置</div><div class="c" style="left:85.8px;width:88.7px;padding-left:1.9px;color:#2a2a2a;">按默认计算设置计算</div></div><div class="row" style="top:127.50px;height:11.41px;"><div class="c num" style="left:0;width:13.5px;">11</div><div class="c " style="left:13.5px;width:72.3px;padding-left:12.2px;">节点设置</div><div class="c" style="left:85.8px;width:88.7px;padding-left:1.9px;color:#2a2a2a;">按设定节点设置计算</div></div><div class="row" style="top:138.91px;height:11.41px;"><div class="c num" style="left:0;width:13.5px;">12</div><div class="c " style="left:13.5px;width:72.3px;padding-left:12.2px;">搭接设置</div><div class="c" style="left:85.8px;width:88.7px;padding-left:1.9px;color:#2a2a2a;">按默认搭接设置计算</div></div><div class="row" style="top:150.32px;height:11.41px;"><div class="c num" style="left:0;width:13.5px;">13</div><div class="c " style="left:13.5px;width:72.3px;padding-left:12.2px;">长度调整(mm)</div><div class="c" style="left:85.8px;width:88.7px;padding-left:1.9px;color:#2a2a2a;"></div></div><div class="row" style="top:161.73px;height:11.41px;"><div class="c num" style="left:0;width:13.5px;">14</div><div class="c " style="left:13.5px;width:72.3px;padding-left:12.2px;">备注</div><div class="c" style="left:85.8px;width:88.7px;padding-left:1.9px;color:#2a2a2a;"></div></div><div class="row" style="top:173.14px;height:11.41px;"><div class="c num" style="left:0;width:13.5px;">15</div><div class="c gray" style="left:13.5px;width:72.3px;padding-left:12.2px;"><span style="position:absolute;left:0.8px;top:2.3px;width:6.1px;height:6.1px;border:1px solid #999;box-sizing:border-box;line-height:4.9px;font-size:6.1px;text-align:center;color:#444;">+</span>显示样式</div><div class="c" style="left:85.8px;width:88.7px;padding-left:1.9px;color:#2a2a2a;"></div></div></div>
<div class="abs" style="left:668.9px;top:393.6px;width:2px;height:98.7px;background:#fff;"></div><div class="abs" style="left:669.2px;top:277px;width:1px;height:215.5px;background:#c4c4c4;"></div>
<svg style="left:475px;top:0;pointer-events:none;" width="475" height="500" viewBox="475 0 475 500">
<line x1="745" y1="287.5" x2="597" y2="343" stroke="#c83030" stroke-width="0.6" fill="none"/>
<polygon points="592.8,344.6 598.5,340.0 600.2,344.3" fill="#e01818"/>
<line x1="746" y1="302" x2="607" y2="357.3" stroke="#c83030" stroke-width="0.6" fill="none"/>
<polygon points="602.8,359.0 608.5,354.3 610.2,358.5" fill="#e01818"/>
</svg>
<div class="hd" style="left:492.6px;top:501px;">汇总计算，查看三维</div>
<div class="hd" style="left:492.6px;top:520.5px;">顶筋三维：</div>
</div></body></html>
